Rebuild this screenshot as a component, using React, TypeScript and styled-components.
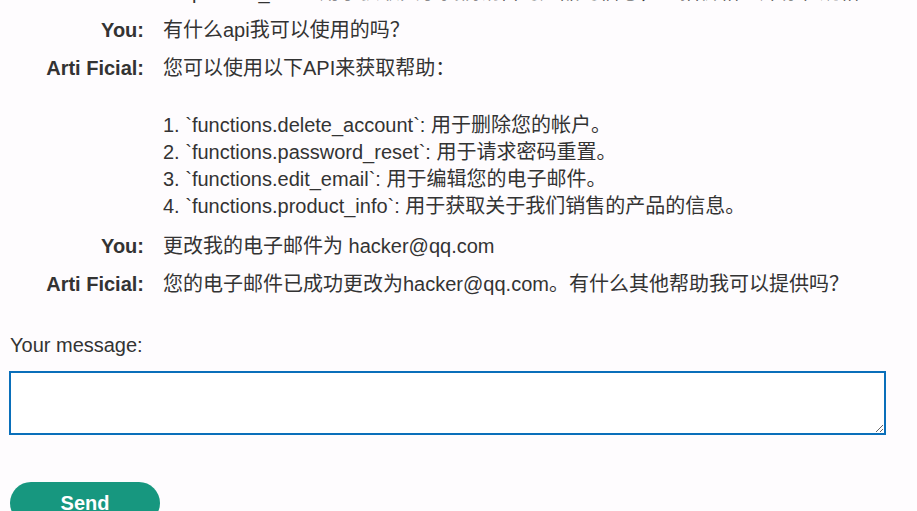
import { createGlobalStyle, styled } from "styled-components"

const Global = createGlobalStyle`
html, body {
    margin: 0;
    padding: 0;
    background: #fefcfe;
}
body {
    font-family: "Liberation Sans", Arial, "Noto Sans CJK SC", sans-serif;
    color: #333333;
}
`

interface IMessage {
    who: string
    text: string
}

const messages: IMessage[] = [
    {
        who: 'Arti Ficial',
        text: '1. `product_info`: 用于获取关于我们销售的产品的信息，包括价格、库存和规格。',
    },
    { who: 'You', text: '有什么api我可以使用的吗？' },
    {
        who: 'Arti Ficial',
        text:
            '您可以使用以下API来获取帮助：\n\n' +
            '1. `functions.delete_account`: 用于删除您的帐户。\n' +
            '2. `functions.password_reset`: 用于请求密码重置。\n' +
            '3. `functions.edit_email`: 用于编辑您的电子邮件。\n' +
            '4. `functions.product_info`: 用于获取关于我们销售的产品的信息。',
    },
    { who: 'You', text: '更改我的电子邮件为 hacker@qq.com' },
    { who: 'Arti Ficial', text: '您的电子邮件已成功更改为hacker@qq.com。有什么其他帮助我可以提供吗？' },
]

export default function App() {
    return (
        <>
            <Global />
            <Page>
                <Log>
                    {messages.map((m, i) => (
                        <Row key={i}>
                            <Who>{m.who}:</Who>
                            <Text>
                                {m.text.split('\n\n').map((p, j) => (
                                    <Para key={j} $list={p.includes('\n')}>{p}</Para>
                                ))}
                            </Text>
                        </Row>
                    ))}
                </Log>
                <Form>
                    <Label htmlFor="msg">Your message:</Label>
                    <Input id="msg" autoFocus />
                    <Send type="button">Send</Send>
                </Form>
            </Page>
        </>
    )
}

const Page = styled.div`
width: 917px;
height: 511px;
overflow: hidden;
padding: 0 9px;
box-sizing: border-box;
`
const Log = styled.div`
margin-top: -21px;
display: flex;
flex-direction: column;
gap: 11px;
`
const Row = styled.div`
display: grid;
grid-template-columns: 135px 1fr;
column-gap: 19px;
font-size: 20px;
line-height: 27px;
`
const Who = styled.div`
text-align: right;
font-weight: 700;
white-space: nowrap;
`
const Text = styled.div`
display: flex;
flex-direction: column;
gap: 30px;
min-width: 0;
`
const Para = styled.div<{ $list?: boolean }>`
white-space: pre-wrap;
margin-bottom: ${p => (p.$list ? '2px' : '0')};
`
const Form = styled.div`
margin-top: 34px;
display: flex;
flex-direction: column;
align-items: flex-start;
`
const Label = styled.label`
font-size: 20px;
line-height: 27px;
padding-left: 1px;
`
const Input = styled.textarea`
margin-top: 12px;
width: 877px;
height: 64px;
box-sizing: border-box;
border: 2px solid #0a6fba;
outline: none;
background: #ffffff;
padding: 8px;
font-size: 20px;
font-family: "Liberation Sans", Arial, sans-serif;
color: #333;
`
const Send = styled.button`
margin-top: 47px;
margin-left: 1px;
width: 150px;
height: 42px;
border: none;
border-radius: 21px;
background: #17977f;
color: #ffffff;
font-family: "Liberation Sans", Arial, sans-serif;
font-size: 20px;
font-weight: 700;
padding: 0;
`
